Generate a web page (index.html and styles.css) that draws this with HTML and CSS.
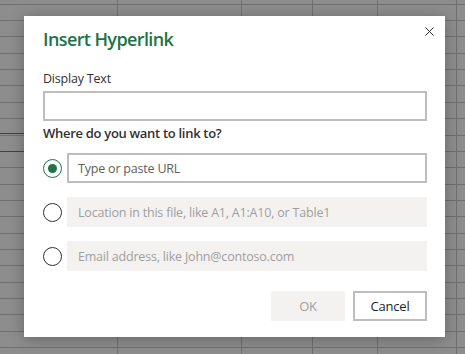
FILE: index.html
```html
<!DOCTYPE html>
<html lang="en">

<head>
    <meta charset="UTF-8" />
    <title>Insert Hyperlink</title>
    <link rel="stylesheet" href="styles.css">
</head>

<body>

    <!-- sheet behind the overlay -->
    <div class="selection"></div>

    <div class="dialog">
        <button class="close" aria-label="Close">
            <svg width="9" height="9" viewBox="0 0 9 9">
                <path d="M0.5 0.5 L8.5 8.5 M8.5 0.5 L0.5 8.5" stroke="#323130" stroke-width="1" fill="none" />
            </svg>
        </button>

        <div class="title">Insert Hyperlink</div>

        <label class="label">Display Text</label>
        <input class="field" type="text">

        <div class="question">Where do you want to link to?</div>

        <div class="options">
            <div class="option">
                <span class="radio checked"></span>
                <input class="field" type="text" placeholder="Type or paste URL">
            </div>
            <div class="option">
                <span class="radio"></span>
                <input class="field disabled" type="text" placeholder="Location in this file, like A1, A1:A10, or Table1" disabled>
            </div>
            <div class="option">
                <span class="radio"></span>
                <input class="field disabled" type="text" placeholder="Email address, like John@contoso.com" disabled>
            </div>
        </div>

        <div class="buttons">
            <button class="btn ok" disabled>OK</button>
            <button class="btn cancel">Cancel</button>
        </div>
    </div>

</body>

</html>
```

FILE: styles.css
```css
html,
body {
    margin: 0;
    padding: 0;
    width: 465px;
    height: 354px;
    overflow: hidden;
    font-family: "Open Sans", "Noto Sans", sans-serif;
}

body {
    position: relative;
    background-color: #8d8d8d;
    background-image:
        linear-gradient(to right,
            transparent 117px, #707070 117px 118px,
            transparent 118px 241px, #707070 241px 242px,
            transparent 242px 312px, #707070 312px 313px,
            transparent 313px 377px, #707070 377px 378px,
            transparent 378px 456px, #707070 456px 457px,
            transparent 457px),
        repeating-linear-gradient(to bottom,
            transparent 0 3.7px, #707070 3.7px 4.7px, transparent 4.7px 16.35px);
    display: flex;
    flex-direction: column;
}

/* selected cell, under the overlay */
.selection {
    position: absolute;
    left: -4px;
    top: 133px;
    width: 40px;
    height: 17px;
    border-top: 1px solid #1f5832;
    border-bottom: 1px solid #1f5832;
}

.dialog {
    position: relative;
    margin: 16px 0 0 24px;
    width: 421px;
    height: 321px;
    box-sizing: border-box;
    padding: 11px 18px 0 19px;
    background: #fff;
    box-shadow: 0 2px 14px rgba(0, 0, 0, 0.28);
    display: flex;
    flex-direction: column;
    color: #323130;
}

.close {
    position: absolute;
    top: 11px;
    right: 11px;
    width: 9px;
    height: 9px;
    padding: 0;
    border: 0;
    background: none;
    display: flex;
}

.title {
    font-size: 18px;
    line-height: 24px;
    font-weight: 600;
    color: #217346;
    letter-spacing: -0.6px;
}

.label {
    margin-top: 19px;
    font-size: 12.5px;
    line-height: 18px;
    letter-spacing: -0.2px;
}

.field {
    box-sizing: border-box;
    width: 100%;
    height: 30px;
    margin: 3px 0 0;
    padding: 0 9px;
    border: 2px solid #bdbdbd;
    background: #fff;
    font-family: inherit;
    font-size: 12.5px;
    letter-spacing: -0.2px;
    outline: none;
}

.field::placeholder {
    color: #605e5c;
}

.field.disabled {
    border-color: #f3f2f1;
    background: #f3f2f1;
}

.field.disabled::placeholder {
    color: #a19f9d;
}

.question {
    margin-top: 3px;
    font-size: 13px;
    line-height: 18px;
    font-weight: 600;
    letter-spacing: -0.3px;
}

.options {
    margin-top: 11px;
    display: flex;
    flex-direction: column;
    gap: 14px;
}

.option {
    display: flex;
    align-items: center;
    gap: 5px;
}

.option .field {
    margin: 0;
    flex: 1;
}

.radio {
    box-sizing: border-box;
    flex: none;
    width: 19px;
    height: 19px;
    border: 1px solid #323130;
    border-radius: 50%;
    display: flex;
    justify-content: center;
    align-items: center;
}

.radio.checked {
    border-color: #217346;
}

.radio.checked::after {
    content: "";
    width: 9px;
    height: 9px;
    border-radius: 50%;
    background: #217346;
}

.buttons {
    margin-top: 20px;
    display: flex;
    justify-content: flex-end;
    gap: 8px;
}

.btn {
    box-sizing: border-box;
    width: 74px;
    height: 30px;
    font-family: inherit;
    font-size: 13px;
    font-weight: 400;
    letter-spacing: -0.2px;
    padding: 0;
}

.ok {
    border: 0;
    background: #f3f2f1;
    color: #a19f9d;
}

.cancel {
    border: 2px solid #bdbdbd;
    background: #fff;
    color: #201f1e;
}
```
